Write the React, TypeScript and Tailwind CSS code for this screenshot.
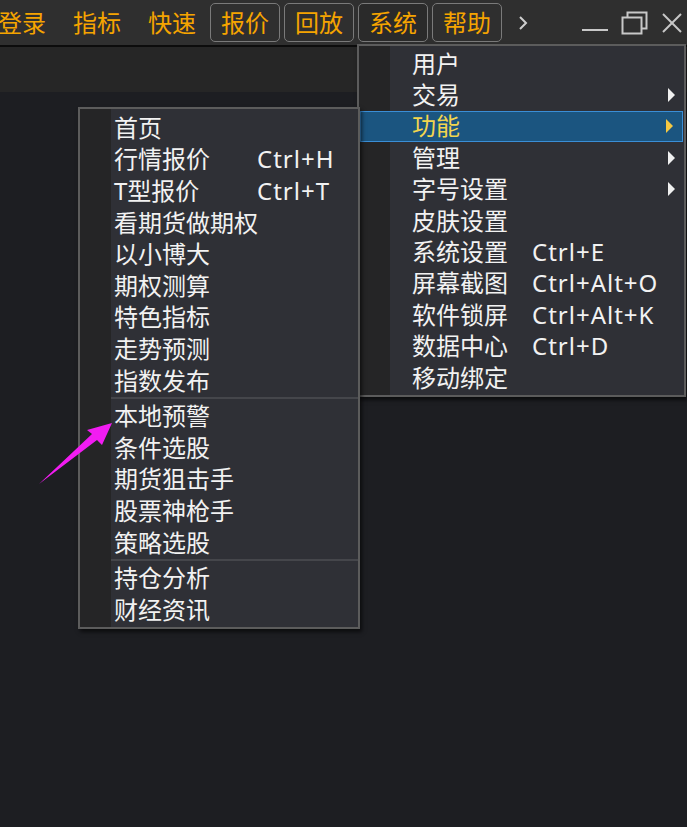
import React from "react";

const FONT = { fontFamily: '"Noto Sans", "Noto Sans CJK SC", sans-serif' };

type Item = { label: string; shortcut?: string; arrow?: boolean; active?: boolean; sep?: boolean };

const leftItems: Item[] = [
  { label: "首页" },
  { label: "行情报价", shortcut: "Ctrl+H" },
  { label: "T型报价", shortcut: "Ctrl+T" },
  { label: "看期货做期权" },
  { label: "以小博大" },
  { label: "期权测算" },
  { label: "特色指标" },
  { label: "走势预测" },
  { label: "指数发布" },
  { label: "", sep: true },
  { label: "本地预警" },
  { label: "条件选股" },
  { label: "期货狙击手" },
  { label: "股票神枪手" },
  { label: "策略选股" },
  { label: "", sep: true },
  { label: "持仓分析" },
  { label: "财经资讯" },
];

const rightItems: Item[] = [
  { label: "用户" },
  { label: "交易", arrow: true },
  { label: "功能", arrow: true, active: true },
  { label: "管理", arrow: true },
  { label: "字号设置", arrow: true },
  { label: "皮肤设置" },
  { label: "系统设置", shortcut: "Ctrl+E" },
  { label: "屏幕截图", shortcut: "Ctrl+Alt+O" },
  { label: "软件锁屏", shortcut: "Ctrl+Alt+K" },
  { label: "数据中心", shortcut: "Ctrl+D" },
  { label: "移动绑定" },
];

function Arrow({ color }: { color: string }) {
  return (
    <svg width="8" height="14" viewBox="0 0 8 14" className="ml-auto mr-[8px]">
      <polygon points="0,0 7,7 0,14" fill={color} />
    </svg>
  );
}

function Menu({
  items,
  pl,
  activePl,
  labelW,
  rowH,
  className,
}: {
  items: Item[];
  pl: string;
  activePl: string;
  labelW: string;
  rowH: string;
  className: string;
}) {
  return (
    <div
      className={`absolute flex flex-col border-2 border-[#5c5c5c] bg-[linear-gradient(to_right,#252526_31px,#2f3036_31px)] shadow-[2px_3px_4px_rgba(0,0,0,0.6)] ${className}`}
    >
      {items.map((it, i) =>
        it.sep ? (
          <div key={i} className="flex h-[4px] items-center pl-[31px]">
            <div className="h-[2px] w-full bg-[#45464b]" />
          </div>
        ) : (
          <div
            key={i}
            className={`flex ${rowH} shrink-0 items-center text-[24px] leading-none ${
              it.active
                ? "mx-[1px] border border-[#3a8ed6] bg-[#1b5580] text-[#f3d54e]"
                : "text-[#f2f2f2]"
            }`}
          >
            <div className={`flex items-center ${it.active ? activePl : pl}`}>
              <span className={`${labelW} whitespace-nowrap`}>{it.label}</span>
              {it.shortcut && <span className="whitespace-nowrap tracking-[1px]">{it.shortcut}</span>}
            </div>
            {it.arrow && <Arrow color={it.active ? "#f5c842" : "#f0f0f0"} />}
          </div>
        )
      )}
    </div>
  );
}

export default function App() {
  return (
    <div className="relative h-[827px] w-[687px] overflow-hidden bg-[#1d1e22]" style={FONT}>
      {/* top bar */}
      <div className="flex h-[45px] items-center bg-[#2f2f2f] text-[24px] text-[#f5a400]">
        <div className="ml-[-2px] flex items-center gap-[27px]">
          <span className="leading-none">登录</span>
          <span className="leading-none">指标</span>
          <span className="leading-none">快速</span>
        </div>
        <div className="ml-[14px] flex items-center gap-[4px]">
          {["报价", "回放", "系统", "帮助"].map((t) => (
            <div
              key={t}
              className={`flex h-[39px] w-[70px] items-center justify-center rounded-[5px] border-[1.5px] border-[#7a7a7a] leading-none ${
                t === "系统" ? "bg-[#2a2a2a]" : ""
              }`}
            >
              {t}
            </div>
          ))}
        </div>
        <svg width="10" height="16" viewBox="0 0 10 16" className="ml-[16px]">
          <polyline points="2,2 8,8 2,14" fill="none" stroke="#cfcfcf" strokeWidth="2" />
        </svg>
        <div className="ml-auto mr-[4px] flex items-center gap-[12px]">
          <svg width="28" height="24" viewBox="0 0 28 24">
            <line x1="1" y1="19" x2="27" y2="19" stroke="#c8c8c8" strokeWidth="2" />
          </svg>
          <svg width="28" height="24" viewBox="0 0 28 24">
            <rect x="1.5" y="6.5" width="19" height="16" fill="none" stroke="#c8c8c8" strokeWidth="2" />
            <polyline points="6.5,6.5 6.5,1.5 25.5,1.5 25.5,17.5 20.5,17.5" fill="none" stroke="#c8c8c8" strokeWidth="2" />
          </svg>
          <svg width="22" height="22" viewBox="0 0 22 22">
            <line x1="2" y1="2" x2="20" y2="20" stroke="#c8c8c8" strokeWidth="2" />
            <line x1="20" y1="2" x2="2" y2="20" stroke="#c8c8c8" strokeWidth="2" />
          </svg>
        </div>
      </div>
      <div className="h-[2px] bg-[#0c0c0c]" />
      <div className="h-[45px] bg-[#262626]" />

      {/* menus */}
      <Menu
        items={rightItems}
        pl="pl-[53px]"
        activePl="pl-[51px]"
        labelW="w-[120px]"
        rowH="h-[31.4px]"
        className="left-[357px] top-[44px] w-[329px] py-[2px]"
      />
      <Menu
        items={leftItems}
        pl="pl-[34px]"
        activePl="pl-[32px]"
        labelW="w-[143px]"
        rowH="h-[31.6px]"
        className="left-[78px] top-[107px] w-[282px] pt-[3px] pb-[1px]"
      />

      {/* annotation arrow */}
      <svg className="absolute left-0 top-0" width="687" height="827" viewBox="0 0 687 827">
        <polygon points="39,484 92,434 87,430 112,423 102,445 97,440" fill="#f21cf2" />
      </svg>
    </div>
  );
}
